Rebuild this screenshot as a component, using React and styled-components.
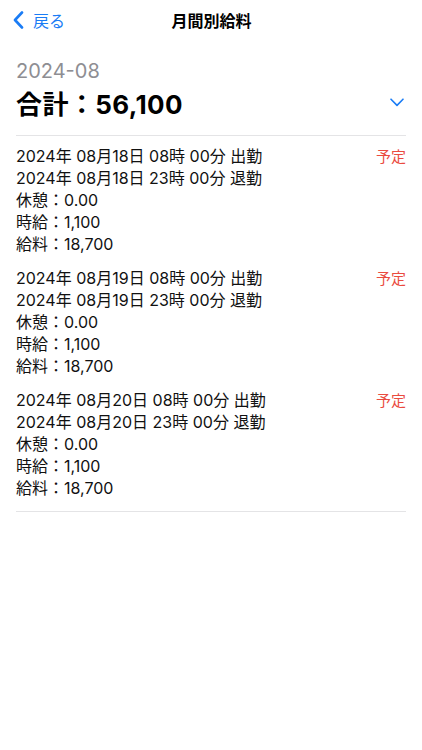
import React from "react";
import styled, { createGlobalStyle } from "styled-components";

const Global = createGlobalStyle`
  html, body { margin: 0; padding: 0; background: #ffffff; }
  body { font-family: "Inter", "Noto Sans CJK JP", sans-serif; color: #000; }
`;

const Page = styled.div`
  width: 422px;
  min-height: 750px;
  background: #fff;
`;

const NavBar = styled.div`
  height: 40px;
  display: grid;
  grid-template-columns: 1fr auto 1fr;
  align-items: center;
  padding: 0 12px 0 13px;
`;

const Back = styled.div`
  display: flex;
  align-items: center;
  gap: 9px;
  color: #1a7cf5;
  font-size: 16px;
  font-family: "Noto Sans CJK JP", sans-serif;
`;

const Title = styled.div`
  font-size: 16px;
  font-weight: 700;
  font-family: "Noto Sans CJK JP", sans-serif;
`;

const Content = styled.div`
  padding: 19px 16px 0;
`;

const Month = styled.div`
  font-size: 20px;
  line-height: 24px;
  color: #8e8e93;
`;

const TotalRow = styled.div`
  display: flex;
  align-items: center;
  justify-content: space-between;
  height: 32px;
  margin-top: 3px;
  padding-right: 2px;
`;

const Total = styled.div`
  font-size: 26px;
  font-weight: 700;
  letter-spacing: 0.4px;
`;

const Divider = styled.div`
  height: 1px;
  background: #e4e4e6;
  margin-top: ${(p) => p.$top || 0}px;
`;

const Entry = styled.div`
  display: flex;
  justify-content: space-between;
  align-items: flex-start;
  padding: 9px 0 ${(p) => (p.$last ? 12 : 3)}px;
`;

const Lines = styled.div`
  display: flex;
  flex-direction: column;
`;

const Line = styled.div`
  font-size: 16px;
  line-height: 22px;
  color: #111;
`;

const Status = styled.div`
  font-size: 15px;
  line-height: 22px;
  color: #ea4b3f;
  font-family: "Noto Sans CJK JP", sans-serif;
`;

const Chevron = styled.svg`
  display: block;
`;

const entries = [{ day: "18" }, { day: "19" }, { day: "20" }];

export default function App() {
  return (
    <Page>
      <Global />
      <NavBar>
        <Back>
          <Chevron width="11" height="18" viewBox="0 0 11 18">
            <path d="M9 1.5 L2 9 L9 16.5" fill="none" stroke="#1a7cf5" strokeWidth="2.6" strokeLinecap="round" strokeLinejoin="round" />
          </Chevron>
          戻る
        </Back>
        <Title>月間別給料</Title>
        <div />
      </NavBar>
      <Content>
        <Month>2024-08</Month>
        <TotalRow>
          <Total>合計：56,100</Total>
          <Chevron width="14" height="9" viewBox="0 0 14 9">
            <path d="M1 1.2 L7 7.4 L13 1.2" fill="none" stroke="#1a7cf5" strokeWidth="1.6" strokeLinecap="round" strokeLinejoin="round" />
          </Chevron>
        </TotalRow>
        <Divider $top={17} />
        {entries.map((e, i) => (
          <Entry key={e.day} $last={i === entries.length - 1}>
            <Lines>
              <Line>2024年 08月{e.day}日 08時 00分 出勤</Line>
              <Line>2024年 08月{e.day}日 23時 00分 退勤</Line>
              <Line>休憩：0.00</Line>
              <Line>時給：1,100</Line>
              <Line>給料：18,700</Line>
            </Lines>
            <Status>予定</Status>
          </Entry>
        ))}
        <Divider />
      </Content>
    </Page>
  );
}
